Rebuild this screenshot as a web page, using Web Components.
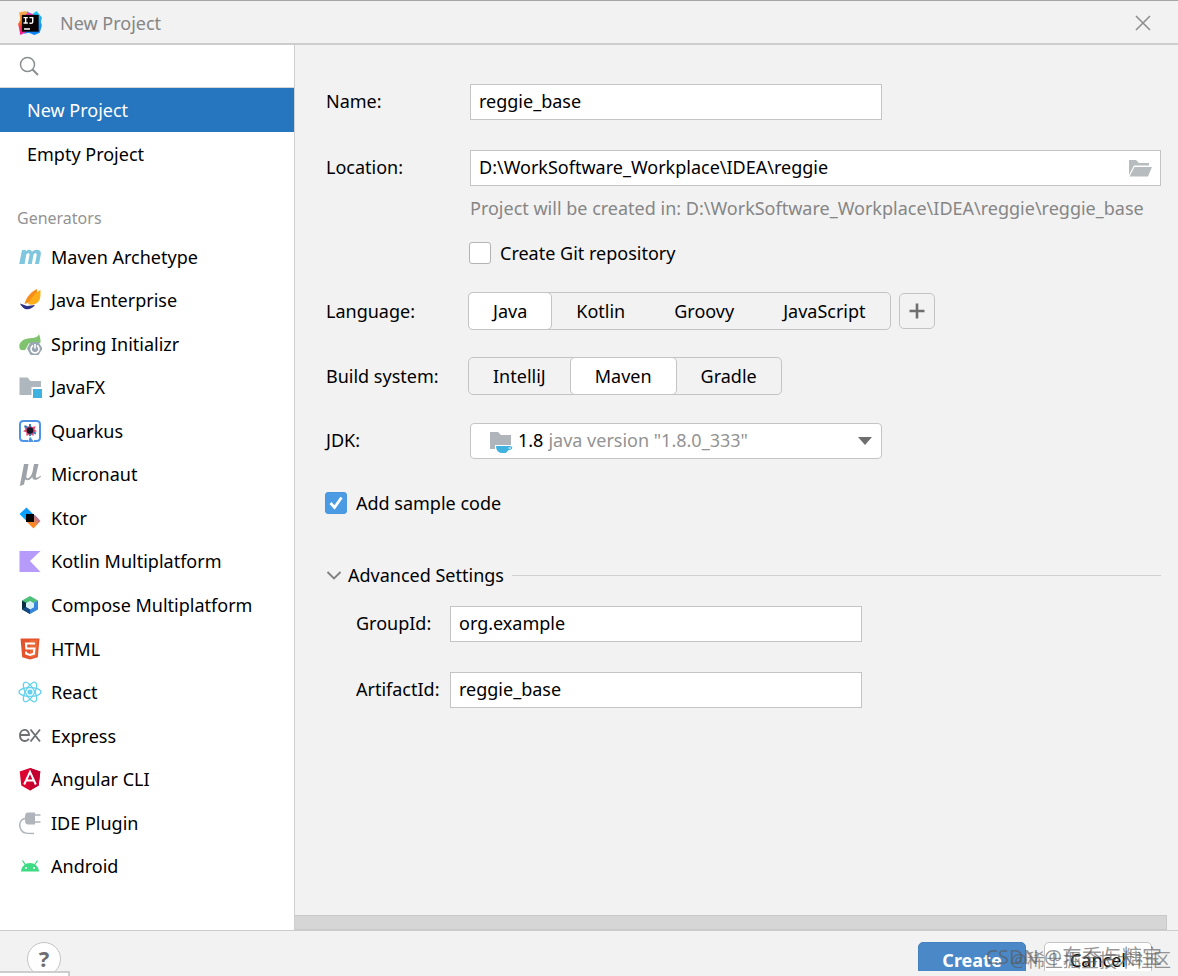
<!DOCTYPE html>
<html lang="en">
<head>
<meta charset="utf-8">
<title>New Project</title>
<style>
  body {
    margin: 0;
    background: #f2f2f2;
    color: #000;
    font: 18px/24px "Noto Sans", "Open Sans", "Noto Sans CJK SC", sans-serif;
  }
</style>
</head>
<body>
<project-wizard></project-wizard>

<script>
const escapeHtml = (value) => String(value ?? '')
  .replace(/&/g, '&amp;')
  .replace(/</g, '&lt;')
  .replace(/>/g, '&gt;')
  .replace(/"/g, '&quot;');

const svg = (body, size = 24) =>
  `<svg width="${size}" height="${size}" viewBox="0 0 24 24" fill="none" aria-hidden="true">${body}</svg>`;

const ICONS = {
  idea: svg(`
    <defs>
      <linearGradient id="l" x1="0" y1="0" x2="0" y2="1"><stop stop-color="#fcb25a"/><stop offset=".45" stop-color="#f97a12"/><stop offset=".7" stop-color="#fe2857"/><stop offset="1" stop-color="#f01fa8"/></linearGradient>
      <linearGradient id="r" x1="0" y1="0" x2="0" y2="1"><stop stop-color="#21c5f3"/><stop offset="1" stop-color="#087cfa"/></linearGradient>
    </defs>
    <path d="M2 2l6-1 4 3v15l-9 4-1-6-1-4 2-4z" fill="url(#l)"/>
    <path d="M9 1l5 3 4-3 5 6-1 4 1 3-2 7-5 2-5-2-5 1 5-5z" fill="url(#r)"/>
    <path d="M10 2l5 2-4 3-4-1z" fill="#ee3bb0"/>
    <path d="M4.500 4.500h15.500v15.500h-15.500z" fill="#0b0204"/>
    <path d="M6 7h4M8 7v5M6 12h4M11.500 7h3v4q0 1.300-1.500 1.300h-1.500M6.500 17.500h5.500" stroke="#fff" stroke-width="1.300"/>`, 26),
  search: svg('<circle cx="10.500" cy="10.500" r="7" stroke="#8b8e90" stroke-width="1.500"/><path d="M15.500 15.500l5.500 5.500" stroke="#8b8e90" stroke-width="2"/>'),
  close: svg('<path d="M5 5l14 14M19 5L5 19" stroke="#8c8c8c" stroke-width="1.500"/>'),
  maven: svg('<path d="M4 5h4l-.3 1.500C10 4 13 4 14 6.800 16.800 3.500 24 3.800 22.800 9.500L21 19h-4l1.700-9c.4-2.400-2.700-2.400-3.300.2L13.800 19h-4l1.700-9c.4-2.400-2.700-2.400-3.300.2L6.600 19h-5.400z" fill="#7fc6de"/>'),
  javaee: svg('<path d="M19 1c-5 2-11 8-12.500 15 6-2 14-5 12.500-15z" fill="#f98d1c"/><path d="M22.500 2c-3 1-9 7-12.500 14 3 1 6 1 9-1 4-3 3.500-8 3.500-13z" fill="#fbae17"/><path d="M2 15.500l7 2.500 8-1c-2 3-6 5-10 4-2-1-4-3-5-5.500z" fill="#2e3186"/>'),
  spring: svg('<path d="M21 2c-1 3-4 4-9 4.200C4 6.500-.5 12 2 17c1 1.300 3 1.600 5 1.300l4-7 7-1 4.300 1C23 8 22 5 21 2z" fill="#7fc36f"/><path d="M2 19c6 0 10-2 13-7" stroke="#fff" stroke-width="1"/><path d="M12.500 10h8l4 6.500-4 6.500h-8l-3.500-6.500z" fill="#9aa7b0"/><path d="M15 13.500a4 4 0 1 0 4 0M17 12v4.500" stroke="#fff" stroke-width="1.600"/>'),
  javafx: svg('<path d="M1.500 2.500h8l3 3.500H23v6h-9.500v8h-12z" fill="#afb7be"/><path d="M15 14h9v9h-9z" fill="#3fb2df"/>'),
  quarkus: svg('<path d="M10 22H5.500Q2 22 2 18.500V5.500Q2 2 5.500 2h13Q22 2 22 5.500v13q0 3.500-3.500 3.500H16" stroke="#4f93e6" stroke-width="2"/><path d="M10 23l2-5.500 4 5.500z" fill="#4f93e6"/><path d="M12 5l1.900 3 3.800-.8-1.200 3.300 2.500 1.800-3.200 1-.3 3.700-3.500-2-3.500 2-.2-3.700-3.300-1 2.500-1.800-1.200-3.300 3.800.8z" fill="#e34972"/><path d="M6.500 7l3 1.500M18 14.500l-3-1M12 17v-3M12 5v3" stroke="#397ebd" stroke-width="2"/><circle cx="12" cy="11.500" r="3.300" fill="#181426"/>'),
  micronaut: svg('<path d="M6 2h4.500L8.500 13q-.7 4 1.500 3.300c2.300-.6 4-4 4.700-7.300L16 2h4.500l-2.600 11.500c-.5 3 1.500 3 4.600.3l.5.700c-4 4.500-9 4.300-8.600.3-2.500 4-6 4.200-7.300 2.500L6 22.500 1.800 24z" fill="#9da3a8"/>'),
  ktor: svg('<defs><linearGradient id="a" x1="0" y1="1" x2="1" y2="0"><stop stop-color="#00b4ff"/><stop offset="1" stop-color="#168bff"/></linearGradient><linearGradient id="b" x1="0" y1="1" x2="1" y2="0"><stop stop-color="#ff742e"/><stop offset=".4" stop-color="#ff8b22"/><stop offset="1" stop-color="#8166e5"/></linearGradient></defs><path d="M1.500 8l7-6.500 10 10-7 6.500z" fill="url(#a)"/><path d="M9 16l8-7 5.500 6-7 7.500z" fill="url(#b)"/><path d="M8 8h8v8H8z" fill="#000"/>'),
  kotlin: svg('<path d="M1.500 2h21L12 12l10.500 11h-21z" fill="#b69bfa"/>'),
  compose: svg('<path d="M12 3l8 4.500-5 3L12 8.500l-4 2-4-3z" fill="#4cbf78"/><path d="M4 7.500l4.500 2.500v4.500L12 16v5L4 16.500z" fill="#083042"/><path d="M20 7.500v9L12 21v-5l3.500-2V10z" fill="#3687dd"/><path d="M12 8l4 2.300v4L12 16.500l-4-2.200v-4z" fill="#d8f1f6"/><path d="M4 16l4-2 4 2.500V21z" fill="#174b86"/>'),
  html: svg('<path d="M2.500 1.500h19l-1.700 18.800L12 22.500l-7.800-2.200z" fill="#e5532d"/><path d="M12 3h7.800l-1.500 16-6.300 1.800z" fill="#ec6a3a"/><path d="M17 6.500H8l.4 5h8l-.5 5.200-3.900 1.200-3.700-1.200-.3-2" stroke="#fff" stroke-width="2.100"/>'),
  react: svg('<g stroke="#65d1ee" stroke-width="1.300"><ellipse cx="12" cy="12" rx="11" ry="4.400"/><ellipse cx="12" cy="12" rx="11" ry="4.400" transform="rotate(60 12 12)"/><ellipse cx="12" cy="12" rx="11" ry="4.400" transform="rotate(120 12 12)"/></g><circle cx="12" cy="12" r="2.600" fill="#65d1ee"/>'),
  express: svg('<path d="M2 11h9c0-7-9-6.700-9 .3 0 6.700 6.500 7 9 3.500M12.500 5.500L22 17.500M22 5.500l-9.500 12" stroke="#6e7173" stroke-width="1.900"/>'),
  angular: svg('<path d="M12 1l10.300 3.600-1.600 14L12 23.500l-8.700-4.900-1.600-14z" fill="#dd0330"/><path d="M12 1l10.300 3.600-1.600 14L12 23.500z" fill="#c3002f"/><path d="M6.200 17.500L12 4.800l5.800 12.700M8.500 13.500h7" stroke="#fff" stroke-width="2"/>'),
  plugin: svg('<path d="M10 1.500h7v12h-7q-3 0-3-4v-4q0-4 3-4z" fill="#afb5ba"/><path d="M17 4h5.500M17 11h5.500" stroke="#afb5ba" stroke-width="1.500"/><path d="M8 7.500c-6 0-8 7-4.500 12 2 3 6 3 12.500 3" stroke="#afb5ba" stroke-width="1.500"/>'),
  android: svg('<path d="M3 17.500C3.500 12 7.500 9 12 9s8.500 3 9 8.500z" fill="#3ddc84"/><path d="M4.500 6.500L7.500 11M19.500 6.500l-3 4.500" stroke="#3ddc84" stroke-width="1.300"/><circle cx="8" cy="14" r="1" fill="#fff"/><circle cx="16" cy="14" r="1" fill="#fff"/>'),
  folder: svg('<path d="M1 4h7l3 3h10v2.500H6L1 19z" fill="#b7bdbe"/><path d="M6.500 11H24l-4 9.500H1.500z" fill="#b7bdbe"/>'),
  jdk: svg('<path d="M1 3h8l3 3h10v10H6v4H1z" fill="#afb5ba"/><path d="M7 17h12.500c5-.8 5 4 .3 4l-3 3h-5C8.500 23 7 20.500 7 17z" fill="#3fb2df"/><path d="M19.500 19h2.500" stroke="#fff"/>'),
  plus: svg('<path d="M12 4.500v15M4.500 12h15" stroke="#6e6e6e" stroke-width="2.600"/>'),
  chevron: svg('<path d="M5.500 9l6.500 6.500L18.500 9" stroke="#7d7f80" stroke-width="1.800"/>'),
};

const BASE = `
  :host { display: block; }
  * { box-sizing: border-box; }
  button, input, select { font: inherit; color: inherit; }
  svg { display: block; flex: none; }
`;

class BaseElement extends HTMLElement {
  constructor() {
    super();
    this.attachShadow({ mode: 'open' });
  }

  connectedCallback() {
    this.shadowRoot.innerHTML = `<style>${BASE}${this.styles()}</style>${this.render()}`;
  }

  attr(name) {
    return escapeHtml(this.getAttribute(name));
  }
}

class TitleBar extends BaseElement {
  styles() {
    return `
      header {
        display: flex;
        align-items: center;
        gap: 17px;
        height: 45px;
        padding: 1px 23px 0 17px;
        border-top: 1px solid #a5a5a5;
        border-bottom: 2px solid #cdcdcd;
        color: #868686;
      }
      h1 { flex: 1; margin: 0; font: inherit; }
      button { padding: 0; border: 0; background: none; }
    `;
  }

  render() {
    return `
      <header>
        ${ICONS.idea}
        <h1><slot></slot></h1>
        <button type="button" aria-label="Close">${ICONS.close}</button>
      </header>
    `;
  }
}

class NavItem extends BaseElement {
  styles() {
    return `
      :host { display: flex; min-height: 32px; }
      a {
        display: flex;
        flex: 1;
        align-items: center;
        gap: 9px;
        padding: 0 18px;
        color: inherit;
        text-decoration: none;
        white-space: nowrap;
      }
      :host([plain]) { height: 44px; }
      :host([plain]) a { padding: 0 27px; }
      :host([selected]) a { background: #2675bf; color: #fff; }
    `;
  }

  render() {
    const icon = ICONS[this.getAttribute('icon')] ?? '';
    return `<a href="#">${icon}<slot></slot></a>`;
  }
}

class SideNav extends BaseElement {
  styles() {
    return `
      :host { background: #fff; border-right: 1px solid #cfcfcf; }
      nav { display: flex; flex-direction: column; height: 100%; padding-bottom: 42px; }
      label {
        display: flex;
        align-items: center;
        height: 43px;
        padding-left: 17px;
        border-bottom: 1px solid #d5d5d5;
      }
      input { flex: 1; min-width: 0; border: 0; outline: 0; background: none; }
      h2 {
        margin: 30px 0 5px;
        padding-left: 17px;
        color: #939393;
        font-size: 16px;
        font-weight: 400;
      }
      .generators { display: flex; flex: 1; flex-direction: column; }
      .generators nav-item { flex: 1; }
    `;
  }

  render() {
    const generators = [
      ['maven', 'Maven Archetype'],
      ['javaee', 'Java Enterprise'],
      ['spring', 'Spring Initializr'],
      ['javafx', 'JavaFX'],
      ['quarkus', 'Quarkus'],
      ['micronaut', 'Micronaut'],
      ['ktor', 'Ktor'],
      ['kotlin', 'Kotlin Multiplatform'],
      ['compose', 'Compose Multiplatform'],
      ['html', 'HTML'],
      ['react', 'React'],
      ['express', 'Express'],
      ['angular', 'Angular CLI'],
      ['plugin', 'IDE Plugin'],
      ['android', 'Android'],
    ];
    return `
      <nav>
        <label>${ICONS.search}<input type="search" aria-label="Search"></label>
        <nav-item plain selected>New Project</nav-item>
        <nav-item plain>Empty Project</nav-item>
        <h2>Generators</h2>
        <div class="generators">
          ${generators.map(([icon, name]) => `<nav-item icon="${icon}">${name}</nav-item>`).join('')}
        </div>
      </nav>
    `;
  }
}

// Label column plus a control, shared by every row of the form
const ROW = `
  .row {
    display: grid;
    grid-template-columns: var(--label-width, 144px) minmax(0, 1fr);
    align-items: center;
    min-height: 36px;
  }
  .row > :first-child { padding-bottom: 2px; }
`;

class TextField extends BaseElement {
  styles() {
    return `
      ${ROW}
      .box {
        display: flex;
        align-items: center;
        height: 36px;
        padding-right: 8px;
        border: 1px solid #c4c4c4;
        background: #fff;
      }
      :host(:not([wide])) .box { max-width: 412px; }
      input { flex: 1; min-width: 0; padding: 0 0 2px 8px; border: 0; outline: 0; background: none; }
      button { padding: 0; border: 0; background: none; }
      .hint { grid-column: 2; padding-top: 10px; color: #868686; white-space: nowrap; }
    `;
  }

  render() {
    return `
      <div class="row">
        <label for="field">${this.attr('label')}</label>
        <div class="box">
          <input id="field" type="text" value="${this.attr('value')}">
          ${this.hasAttribute('browse') ? `<button type="button" aria-label="Browse">${ICONS.folder}</button>` : ''}
        </div>
        ${this.hasAttribute('hint') ? `<div class="hint">${this.attr('hint')}</div>` : ''}
      </div>
    `;
  }
}

class CheckBox extends BaseElement {
  styles() {
    return `
      label { display: inline-flex; align-items: center; gap: 9px; margin-left: -1px; }
      input {
        appearance: none;
        width: 22px;
        height: 22px;
        margin: 0;
        border: 1px solid #b4b4b4;
        border-radius: 3px;
        background: #fff;
      }
      input:checked {
        border-color: #4a98dc;
        background: #4a9ae4 url('data:image/svg+xml,<svg xmlns="http://www.w3.org/2000/svg" viewBox="0 0 20 20"><path d="M4.500 10l4 4.500L15.500 4.500" fill="none" stroke="white" stroke-width="2.800"/></svg>');
      }
    `;
  }

  render() {
    return `<label><input type="checkbox" ${this.hasAttribute('checked') ? 'checked' : ''}><slot></slot></label>`;
  }
}

class SegmentedControl extends BaseElement {
  styles() {
    return `
      ${ROW}
      .row { min-height: 38px; }
      .row > :first-child { padding: 0; }
      .controls { display: flex; align-items: center; gap: 8px; margin-left: -2px; }
      .group {
        display: flex;
        height: 38px;
        border: 1px solid #c4c4c4;
        border-radius: 5px;
      }
      .group label {
        display: flex;
        align-items: center;
        margin: -1px;
        padding: 0 24px;
        border: 1px solid transparent;
        border-radius: 5px;
      }
      .group label + label { margin-left: 0; }
      .group label:has(:checked) { border-color: #c4c4c4; background: #fff; }
      .group label:has(:focus-visible) { outline: 2px solid #4a9ae4; }
      input { width: 0; height: 0; margin: 0; appearance: none; outline: 0; }
      .add {
        display: grid;
        place-items: center;
        width: 36px;
        height: 36px;
        padding: 0;
        border: 1px solid #c4c4c4;
        border-radius: 5px;
        background: none;
      }
    `;
  }

  render() {
    const value = this.getAttribute('value');
    const options = this.getAttribute('options').split(',');
    return `
      <div class="row">
        <span id="caption">${this.attr('label')}</span>
        <div class="controls">
          <div class="group" role="radiogroup" aria-labelledby="caption">
            ${options.map((name) => `
              <label><input type="radio" name="option" ${name === value ? 'checked' : ''}>${escapeHtml(name)}</label>
            `).join('')}
          </div>
          ${this.hasAttribute('extendable') ? `<button class="add" type="button" aria-label="Add">${ICONS.plus}</button>` : ''}
        </div>
      </div>
    `;
  }
}

class JdkPicker extends BaseElement {
  styles() {
    return `
      ${ROW}
      .box {
        display: flex;
        align-items: center;
        max-width: 412px;
        height: 36px;
        padding-left: 18px;
        border: 1px solid #c4c4c4;
        border-radius: 4px;
        background: #fff;
      }
      .version { margin: 0 5px; padding-bottom: 2px; }
      select {
        flex: 1;
        min-width: 0;
        padding: 0 0 2px;
        border: 0;
        outline: 0;
        appearance: none;
        color: #939393;
        background: url('data:image/svg+xml,<svg xmlns="http://www.w3.org/2000/svg" width="14" height="8"><path d="M0 0h14L7 8z" fill="%236e6e6e"/></svg>') no-repeat right 9px center;
      }
    `;
  }

  render() {
    return `
      <div class="row">
        <label for="jdk">${this.attr('label')}</label>
        <div class="box">
          ${ICONS.jdk}
          <span class="version">${this.attr('version')}</span>
          <select id="jdk"><option>${this.attr('detail')}</option></select>
        </div>
      </div>
    `;
  }
}

class SettingsSection extends BaseElement {
  styles() {
    return `
      :host { --label-width: 94px; }
      details { padding: 0; }
      summary { display: flex; align-items: center; height: 24px; list-style: none; }
      summary::after { content: ""; flex: 1; margin-left: 8px; border-top: 1px solid #d1d1d1; }
      summary svg { margin-right: 2px; margin-left: -4px; }
      .content { display: grid; gap: 30px; padding: 19px 0 0 30px; }
    `;
  }

  render() {
    return `
      <details open>
        <summary>${ICONS.chevron}${this.attr('heading')}</summary>
        <div class="content"><slot></slot></div>
      </details>
    `;
  }
}

class ProjectForm extends BaseElement {
  styles() {
    return `
      :host { padding: 39px 17px 0 31px; }
      form { display: grid; }
      .name { margin-bottom: 30px; }
      .git { margin: 21px 0 23px 144px; }
      .language { margin-bottom: 27px; }
      .build { margin-bottom: 28px; }
      .jdk { margin-bottom: 32px; }
      .sample { margin-bottom: 44px; }
    `;
  }

  render() {
    return `
      <form>
        <text-field class="name" label="Name:" value="reggie_base"></text-field>
        <text-field label="Location:" value="D:\\WorkSoftware_Workplace\\IDEA\\reggie" wide browse
          hint="Project will be created in: D:\\WorkSoftware_Workplace\\IDEA\\reggie\\reggie_base"></text-field>
        <check-box class="git">Create Git repository</check-box>
        <segmented-control class="language" label="Language:" options="Java,Kotlin,Groovy,JavaScript" value="Java" extendable></segmented-control>
        <segmented-control class="build" label="Build system:" options="IntelliJ,Maven,Gradle" value="Maven"></segmented-control>
        <jdk-picker class="jdk" label="JDK:" version="1.8" detail='java version "1.8.0_333"'></jdk-picker>
        <check-box class="sample" checked>Add sample code</check-box>
        <settings-section heading="Advanced Settings">
          <text-field label="GroupId:" value="org.example"></text-field>
          <text-field label="ArtifactId:" value="reggie_base"></text-field>
        </settings-section>
      </form>
    `;
  }
}

class DialogFooter extends BaseElement {
  styles() {
    return `
      :host { position: relative; height: 46px; border-top: 1px solid #cdcdcd; }
      footer {
        display: flex;
        align-items: flex-start;
        gap: 18px;
        height: 40px;
        padding: 11px 26px 0 27px;
        overflow: hidden;
      }
      button {
        width: 108px;
        height: 36px;
        padding: 0;
        border: 1px solid #c4c4c4;
        border-radius: 5px;
        background: #fff;
      }
      .help {
        width: 34px;
        height: 34px;
        margin-right: auto;
        padding-bottom: 2px;
        border-radius: 50%;
        color: #6e6e6e;
        font-size: 22px;
        font-weight: 700;
      }
      .primary { border-color: #4481bf; background: #4a88c7; color: #fff; font-weight: 700; }
      .corner {
        width: 70px;
        height: 5px;
        border: solid #cdcdcd;
        border-width: 2px 2px 0 0;
        background: #fff;
      }
      .mark {
        position: absolute;
        right: 7px;
        bottom: 4px;
        color: rgba(90, 90, 90, 0.65);
        font-size: 18px;
        white-space: nowrap;
      }
      .mark.upper { right: 16px; bottom: 7px; font-size: 20px; }
    `;
  }

  render() {
    return `
      <footer>
        <button class="help" type="button" aria-label="Help">?</button>
        <button class="primary" type="button">Create</button>
        <button type="button">Cancel</button>
      </footer>
      <div class="corner"></div>
      <span class="mark upper">CSDN @东乔与糖宝</span>
      <span class="mark">@稀土掘金技术社区</span>
    `;
  }
}

class ProjectWizard extends BaseElement {
  styles() {
    return `
      :host { display: flex; flex-direction: column; min-height: 100vh; overflow: hidden; }
      main { display: grid; flex: 1; grid-template-columns: 295px minmax(0, 1fr); }
      .pane { display: flex; flex-direction: column; }
      project-form { flex: 1; }
      .scrollbar { height: 15px; margin-right: 11px; border: 1px solid #c9c9c9; border-left: 0; background: #d6d6d6; }
    `;
  }

  render() {
    return `
      <title-bar>New Project</title-bar>
      <main>
        <side-nav></side-nav>
        <div class="pane">
          <project-form></project-form>
          <div class="scrollbar"></div>
        </div>
      </main>
      <dialog-footer></dialog-footer>
    `;
  }
}

customElements.define('title-bar', TitleBar);
customElements.define('nav-item', NavItem);
customElements.define('side-nav', SideNav);
customElements.define('text-field', TextField);
customElements.define('check-box', CheckBox);
customElements.define('segmented-control', SegmentedControl);
customElements.define('jdk-picker', JdkPicker);
customElements.define('settings-section', SettingsSection);
customElements.define('project-form', ProjectForm);
customElements.define('dialog-footer', DialogFooter);
customElements.define('project-wizard', ProjectWizard);
</script>
</body>
</html>
